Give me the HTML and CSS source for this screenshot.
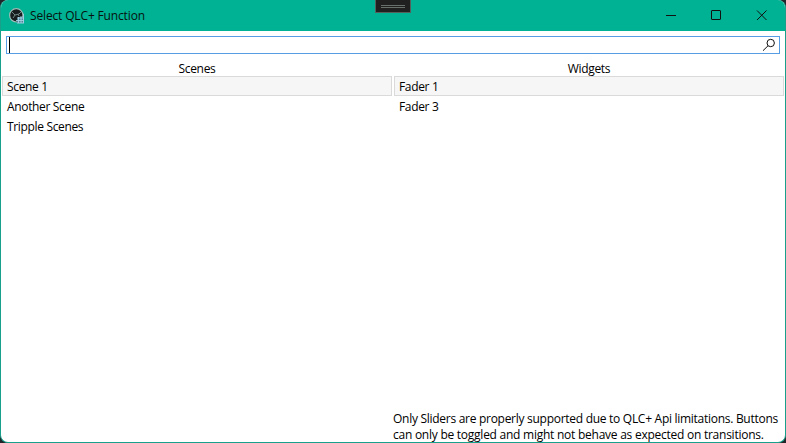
FILE: index.html
```html
<!DOCTYPE html>
<html lang="en">
<head>
<meta charset="utf-8">
<title>Select QLC+ Function</title>
<link rel="stylesheet" href="styles.css">
</head>
<body>
<div class="window">
  <header class="titlebar">
    <svg class="app-icon" width="16" height="16" viewBox="0 0 16 16">
      <circle cx="7.3" cy="7.3" r="6.7" fill="#171d1e" stroke="#9ebdb9" stroke-width="1.2"/>
      <path d="M3 4l3 3 4-1 2-2M6 7l-2 3M9 6l1 2" fill="none" stroke="#718584"/>
      <path d="M9 9h6v6H8v-3z" fill="#4c8796"/>
      <path d="M8 10h7M7 12.500h8M8 15h7M9.500 9v6M12 8v7M14.500 6v9" fill="none" stroke="#a6d0e7" stroke-width=".9"/>
    </svg>
    <h1 class="title">Select QLC+ Function</h1>
    <div class="controls">
      <svg width="11" height="11" viewBox="0 0 11 11"><path d="M0 5.500h10"/></svg>
      <svg width="11" height="11" viewBox="0 0 11 11"><rect x=".5" y=".5" width="9" height="9" rx=".5"/></svg>
      <svg width="11" height="11" viewBox="0 0 11 11"><path d="M1 .5l9.500 9.500M10.500 .5L1 10"/></svg>
    </div>
    <div class="handle"><i></i><i></i></div>
  </header>
  <div class="search">
    <span class="caret"></span>
    <svg width="14" height="14" viewBox="0 0 14 14"><circle cx="8.700" cy="5" r="3.700"/><path d="M6 7.800L1 12.700"/></svg>
  </div>
  <main class="columns">
    <section class="column">
      <h2>Scenes</h2>
      <ul><li class="selected">Scene 1</li><li>Another Scene</li><li>Tripple Scenes</li></ul>
    </section>
    <section class="column">
      <h2>Widgets</h2>
      <ul><li class="selected">Fader 1</li><li>Fader 3</li></ul>
    </section>
  </main>
  <footer class="note"><p class="first">Only Sliders are properly supported due to QLC+ Api limitations. Buttons</p><p>can only be toggled and might not behave as expected on transitions.</p></footer>
</div>
</body>
</html>
```
FILE: styles.css
```css
* { box-sizing: border-box; margin: 0; padding: 0; }
body { background: #20262a; overflow: hidden; font: 12px/16px "Open Sans", "Noto Sans", sans-serif; color: #000; letter-spacing: -0.25px; }
.window { display: flex; flex-direction: column; width: 786px; height: 443px; background: #fff; border: 1px solid #18a08b; border-top: 0; border-radius: 8px; overflow: hidden; }
.titlebar { position: relative; display: flex; align-items: center; height: 31px; flex: none; background: #00b294; padding: 0 18px 0 8px; }
.app-icon { flex: none; margin-right: 5px; }
.title { font-size: 12px; font-weight: 400; color: #07120f; white-space: nowrap; letter-spacing: -0.15px; }
.controls { display: flex; gap: 34px; margin-left: auto; }
.controls svg, .search svg { fill: none; stroke: #111; stroke-width: 1; }
.handle { position: absolute; left: 374px; top: 0; width: 36px; height: 13px; background: #202020; border: 1px solid #55605d; border-top: 0; padding: 5px 5px 0; }
.handle i { display: block; height: 1px; margin-bottom: 1px; background: #68706c; }
.search { display: flex; align-items: center; justify-content: space-between; flex: none; height: 18px; margin: 5px 5px 0; border: 1px solid #569de5; padding: 0 3px 0 2px; }
.caret { width: 1px; height: 16px; background: #000; }
.columns { display: grid; grid-template-columns: 390px 390px; gap: 2px; flex: 1; padding: 6px 1px 0; }
.column { letter-spacing: -0.34px; }
.column h2 { height: 16px; font-size: 12px; font-weight: 400; text-align: center; line-height: 18px; }
.column ul { list-style: none; }
.column li { height: 20px; padding: 2px 4px 0; border: 1px solid transparent; }
.column .selected { background: #f6f6f6; border-color: #dadada; }
.note { width: 392px; margin-left: auto; height: 31px; flex: none; white-space: nowrap; }
.note .first { letter-spacing: -0.28px; }
```
